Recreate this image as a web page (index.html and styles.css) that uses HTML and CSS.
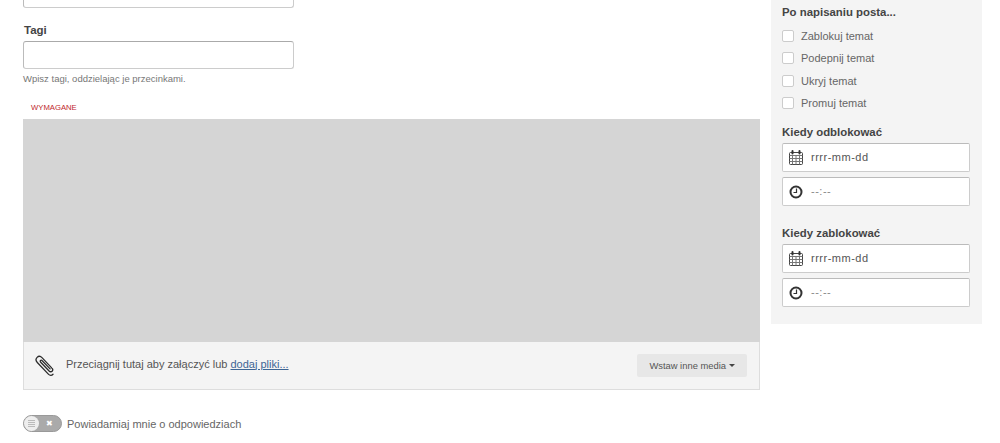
FILE: index.html
```html
<!DOCTYPE html>
<html lang="pl">
<head>
    <meta charset="UTF-8">
    <meta name="viewport" content="width=device-width, initial-scale=1.0">
    <title>Nowy temat</title>
    <link rel="stylesheet" href="styles.css">
</head>
<body>
    <div class="page">
        <div class="main">
            <input class="text-input title-input" type="text">

            <label class="field-label">Tagi</label>
            <input class="text-input" type="text">
            <p class="help">Wpisz tagi, oddzielając je przecinkami.</p>

            <div class="required">WYMAGANE</div>
            <div class="editor">
                <div class="editor-body"></div>
                <div class="attach">
                    <svg class="clip" width="20" height="22" viewBox="0 0 20 22" fill="none" stroke="#2b2b2b" stroke-width="1.300" stroke-linecap="round">
                        <path d="M18 19.300c-1.300 1.400-3.100 1.400-4.400.100L2.300 7.500C.7 5.800.8 3.700 2.100 2.400 3.400 1.100 5.500 1.100 7 2.600l9.900 10.500c1 1 1 2.300.2 3.100-.8.800-2.100.7-3-.2L5.700 7.200c-.6-.6-.6-1.300-.2-1.700.4-.4 1.100-.4 1.700.2l7.900 8.200"/>
                    </svg>
                    <span class="attach-text">Przeciągnij tutaj aby załączyć lub <a href="#">dodaj pliki...</a></span>
                    <button class="media-btn" type="button">Wstaw inne media <span class="caret"></span></button>
                </div>
            </div>

            <div class="notify">
                <div class="toggle">
                    <span class="knob"><span class="knob-lines"></span></span>
                    <span class="toggle-x">✖</span>
                </div>
                <span>Powiadamiaj mnie o odpowiedziach</span>
            </div>
        </div>

        <div class="side">
            <h4 class="side-title first">Po napisaniu posta...</h4>
            <label class="check"><span class="box"></span>Zablokuj temat</label>
            <label class="check"><span class="box"></span>Podepnij temat</label>
            <label class="check"><span class="box"></span>Ukryj temat</label>
            <label class="check"><span class="box"></span>Promuj temat</label>

            <h4 class="side-title unlock">Kiedy odblokować</h4>
            <div class="date-field">
                <svg class="field-icon" width="14" height="15" viewBox="0 0 14 15" fill="none" stroke="#444" stroke-width="1">
                    <rect x="0.500" y="2.500" width="13" height="12" rx="1"/>
                    <path d="M0.500 5.500h13M0.500 8.500h13M0.500 11.500h13M3.500 5.500v9M7 5.500v9M10.500 5.500v9" stroke="#777"/>
                    <path d="M3.500 1v2.500M10.500 1v2.500" stroke="#333" stroke-width="2" stroke-linecap="round"/>
                </svg>
                <span>rrrr-mm-dd</span>
            </div>
            <div class="date-field">
                <svg class="field-icon clock-icon" width="14" height="14" viewBox="0 0 14 14" fill="none" stroke="#333">
                    <circle cx="7" cy="7" r="5.500" stroke-width="2"/>
                    <path d="M7.500 3.500v4H4.500" stroke-width="1.200"/>
                </svg>
                <span class="time-text">--:--</span>
            </div>

            <h4 class="side-title lock">Kiedy zablokować</h4>
            <div class="date-field">
                <svg class="field-icon" width="14" height="15" viewBox="0 0 14 15" fill="none" stroke="#444" stroke-width="1">
                    <rect x="0.500" y="2.500" width="13" height="12" rx="1"/>
                    <path d="M0.500 5.500h13M0.500 8.500h13M0.500 11.500h13M3.500 5.500v9M7 5.500v9M10.500 5.500v9" stroke="#777"/>
                    <path d="M3.500 1v2.500M10.500 1v2.500" stroke="#333" stroke-width="2" stroke-linecap="round"/>
                </svg>
                <span>rrrr-mm-dd</span>
            </div>
            <div class="date-field">
                <svg class="field-icon clock-icon" width="14" height="14" viewBox="0 0 14 14" fill="none" stroke="#333">
                    <circle cx="7" cy="7" r="5.500" stroke-width="2"/>
                    <path d="M7.500 3.500v4H4.500" stroke-width="1.200"/>
                </svg>
                <span class="time-text">--:--</span>
            </div>
        </div>
    </div>
</body>
</html>
```

FILE: styles.css
```css
html, body {
    height: 443px;
    overflow: hidden;
}
body {
    margin: 0;
    font-family: "Liberation Sans", Arial, sans-serif;
    font-size: 12px;
    color: #555;
    background: #fff;
}
.page {
    display: flex;
    align-items: flex-start;
    padding-left: 23px;
}
.main {
    width: 737px;
}
.text-input {
    display: block;
    box-sizing: border-box;
    width: 271px;
    height: 28px;
    margin: 0;
    padding: 0 8px;
    background: #fff;
    border: 1px solid #ccc;
    border-top-color: #aaa;
    border-left-color: #bbb;
    border-radius: 3px;
}
.title-input {
    margin-top: -20px;
}
.field-label {
    display: block;
    margin: 15px 0 3px 1px;
    font-size: 11.500px;
    line-height: 15px;
    font-weight: bold;
    color: #444;
}
.help {
    margin: 3px 0 0;
    font-size: 9.500px;
    line-height: 13px;
    color: #777;
}
.required {
    margin: 18px 0 0 8px;
    font-size: 7.700px;
    line-height: 10px;
    color: #c0272d;
}
.editor {
    margin-top: 6px;
}
.editor-body {
    height: 223px;
    background: #d5d5d5;
}
.attach {
    display: flex;
    align-items: center;
    box-sizing: border-box;
    height: 48px;
    padding: 0 12px 0 11px;
    background: #f4f4f4;
    border: 1px solid #ddd;
    border-top: none;
}
.clip {
    flex: none;
}
.attach-text {
    margin-left: 11px;
    margin-bottom: 4px;
    font-size: 11px;
    color: #555;
}
.attach-text a {
    color: #3d6594;
    text-decoration: underline;
}
.media-btn {
    margin-left: auto;
    box-sizing: border-box;
    width: 110px;
    height: 23px;
    padding: 0;
    font-family: inherit;
    font-size: 9.400px;
    color: #555;
    background: #e7e7e7;
    border: none;
    border-radius: 2px;
}
.caret {
    display: inline-block;
    vertical-align: 2px;
    border-top: 3px solid #444;
    border-left: 3px solid transparent;
    border-right: 3px solid transparent;
}
.notify {
    display: flex;
    align-items: center;
    gap: 5px;
    margin-top: 25px;
    font-size: 11px;
    color: #666;
}
.toggle {
    position: relative;
    box-sizing: border-box;
    width: 39px;
    height: 17px;
    background: #aaa;
    border: 1px solid #999;
    border-radius: 9px;
}
.knob {
    position: absolute;
    left: 0;
    top: 0;
    width: 15px;
    height: 15px;
    background: #eee;
    border-radius: 50%;
}
.knob-lines {
    position: absolute;
    left: 4px;
    top: 4px;
    width: 7px;
    height: 7px;
    background: repeating-linear-gradient(#bbb 0, #bbb 1px, transparent 1px, transparent 2px);
}
.toggle-x {
    position: absolute;
    left: 22px;
    top: 2px;
    font-size: 8px;
    line-height: 11px;
    color: #fff;
}
.side {
    box-sizing: border-box;
    width: 211px;
    height: 324px;
    margin-left: 11px;
    padding: 0 11px;
    background: #f4f4f4;
}
.side-title {
    margin: 0;
    font-size: 11.400px;
    line-height: 14px;
    font-weight: bold;
    color: #444;
}
.side-title.first {
    margin-top: 5px;
    margin-bottom: 5.800px;
}
.side-title.unlock {
    margin-top: 10.200px;
    margin-bottom: 4px;
}
.side-title.lock {
    margin-top: 20px;
    margin-bottom: 4px;
}
.check {
    display: flex;
    align-items: center;
    height: 22.400px;
    font-size: 11px;
    color: #666;
}
.box {
    box-sizing: border-box;
    width: 12px;
    height: 12px;
    margin-right: 7px;
    background: #fff;
    border: 1px solid #ccc;
    border-radius: 2px;
}
.date-field {
    display: flex;
    align-items: center;
    box-sizing: border-box;
    width: 188px;
    height: 29px;
    margin-bottom: 5px;
    padding-left: 6px;
    font-size: 11px;
    letter-spacing: 0.500px;
    color: #555;
    background: #fff;
    border: 1px solid #ccc;
    border-top-color: #bbb;
    border-radius: 2px;
}
.field-icon {
    flex: none;
    margin-right: 8px;
}
.clock-icon {
    margin-top: 2px;
}
.time-text {
    color: #888;
}
```
